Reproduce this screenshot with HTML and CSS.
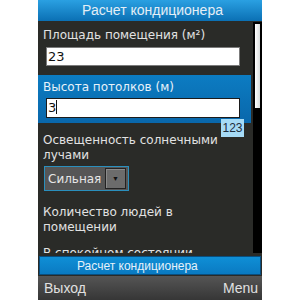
FILE: index.html
```html
<!DOCTYPE html>
<html lang="ru">
<head>
    <meta charset="UTF-8">
    <title>Расчет кондиционера</title>
    <link rel="stylesheet" href="styles.css">
</head>
<body>
    <div class='screen'>
        <div class='title_bar'>Расчет кондиционера</div>
        <div class='content'>
            <div class='form'>
                <div class='field first'>
                    <div class='field_label'>Площадь помещения (м²)</div>
                    <div class='text_input'>23</div>
                </div>
                <div class='field active'>
                    <div class='field_label'>Высота потолков (м)</div>
                    <div class='text_input'>3<span class='caret'></span></div>
                    <span class='input_mode'>123</span>
                </div>
                <div class='field'>
                    <div class='field_label'>Освещенность солнечными лучами</div>
                    <div class='choice'>
                        <span class='choice_value'>Сильная</span>
                        <span class='choice_button'>&#9660;</span>
                    </div>
                </div>
                <div class='field people'>
                    <div class='field_label'>Количество людей в помещении</div>
                </div>
                <div class='field last'>
                    <div class='field_label'>В спокойном состоянии</div>
                </div>
            </div>
            <div class='scrollbar'><div class='scroll_thumb'></div></div>
        </div>
        <div class='action_area'>
            <div class='action_button'>Расчет кондиционера</div>
        </div>
        <div class='softkeys'>
            <span>Выход</span>
            <span>Menu</span>
        </div>
    </div>
</body>
</html>
```

FILE: styles.css
```css
body{
    margin: 0;
    background-color: #ffffff;
    font-family: "Liberation Sans", Arial, sans-serif;
    display: flex;
    justify-content: center;
}

.screen{
    width: 224px;
    height: 300px;
    display: flex;
    flex-direction: column;
    background-color: #2a2b28;
    color: #e2e2e2;
}

.title_bar{
    height: 21px;
    line-height: 21px;
    text-align: center;
    font-size: 14px;
    color: #e4eef6;
    padding-left: 5px;
    background: linear-gradient(#2aa0e2, #0b70b4);
}

.content{
    height: 232px;
    display: flex;
    overflow: hidden;
}

.form{
    width: 215px;
    display: flex;
    flex-direction: column;
}

.field{
    position: relative;
    padding: 10px 5px 14px 5px;
    margin-right: 2px;
}

.field.first{
    padding-top: 7px;
    padding-bottom: 9px;
}

.field.active{
    padding-top: 5px;
    padding-bottom: 5px;
    background: linear-gradient(#0c7cc2, #0967ab);
    color: #e8f2fa;
}

.field.people{
    padding-top: 0;
    padding-bottom: 11px;
}

.field.last{
    padding-top: 0;
}

.field_label{
    font-family: "DejaVu Sans", sans-serif;
    font-size: 12px;
    line-height: 15px;
}

.text_input{
    margin: 4px 6px 0 3px;
    height: 17px;
    line-height: 17px;
    background-color: #ffffff;
    border: 1px solid #7b7b7b;
    color: #111111;
    font-family: "DejaVu Sans", sans-serif;
    font-size: 13px;
    padding-left: 1px;
}

.active .text_input{
    margin-top: 3px;
    height: 18px;
    line-height: 18px;
    border-color: #1b1b1b;
}

.caret{
    display: inline-block;
    width: 1px;
    height: 14px;
    background-color: #111111;
    vertical-align: -2px;
}

.input_mode{
    position: absolute;
    right: 7px;
    top: calc(100% - 4px);
    width: 23px;
    height: 18px;
    line-height: 18px;
    text-align: center;
    font-size: 12px;
    background-color: #a6dbf6;
    color: #1d2d3d;
}

.choice{
    margin-top: 3px;
    margin-left: 1px;
    width: 78px;
    height: 23px;
    display: flex;
    align-items: center;
    justify-content: space-between;
    background-color: #565656;
    border: 1px solid #2a8fbd;
    padding: 0 2px 0 3px;
}

.choice_value{
    font-family: "DejaVu Sans", sans-serif;
    font-size: 12px;
    color: #e6e6e6;
}

.choice_button{
    width: 19px;
    height: 19px;
    line-height: 19px;
    text-align: center;
    font-size: 7px;
    color: #111111;
    background-color: #6c6c6c;
    border: 1px solid #222222;
    box-shadow: inset 1px 1px 0 #8a8a8a;
}

.scrollbar{
    width: 9px;
    height: 231px;
    margin-top: 1px;
    background-color: #000000;
    display: flex;
    justify-content: center;
    padding-top: 2px;
    box-sizing: border-box;
}

.scroll_thumb{
    width: 5px;
    height: 84px;
    background: linear-gradient(90deg, #ffffff, #d8dcdc);
}

.action_area{
    height: 23px;
    padding: 3px 1px 1px 1px;
    box-sizing: border-box;
}

.action_button{
    height: 19px;
    line-height: 18px;
    box-sizing: border-box;
    border: 1px solid #0a4e7e;
    background: linear-gradient(#0f8fd6, #0a7ac2);
    color: #e6f2fa;
    font-size: 12px;
    padding-left: 37px;
}

.softkeys{
    height: 24px;
    display: flex;
    justify-content: space-between;
    align-items: center;
    padding: 0 4px 0 6px;
    background: linear-gradient(#555555, #363636);
    color: #e0e0e0;
    font-size: 14px;
}
```
